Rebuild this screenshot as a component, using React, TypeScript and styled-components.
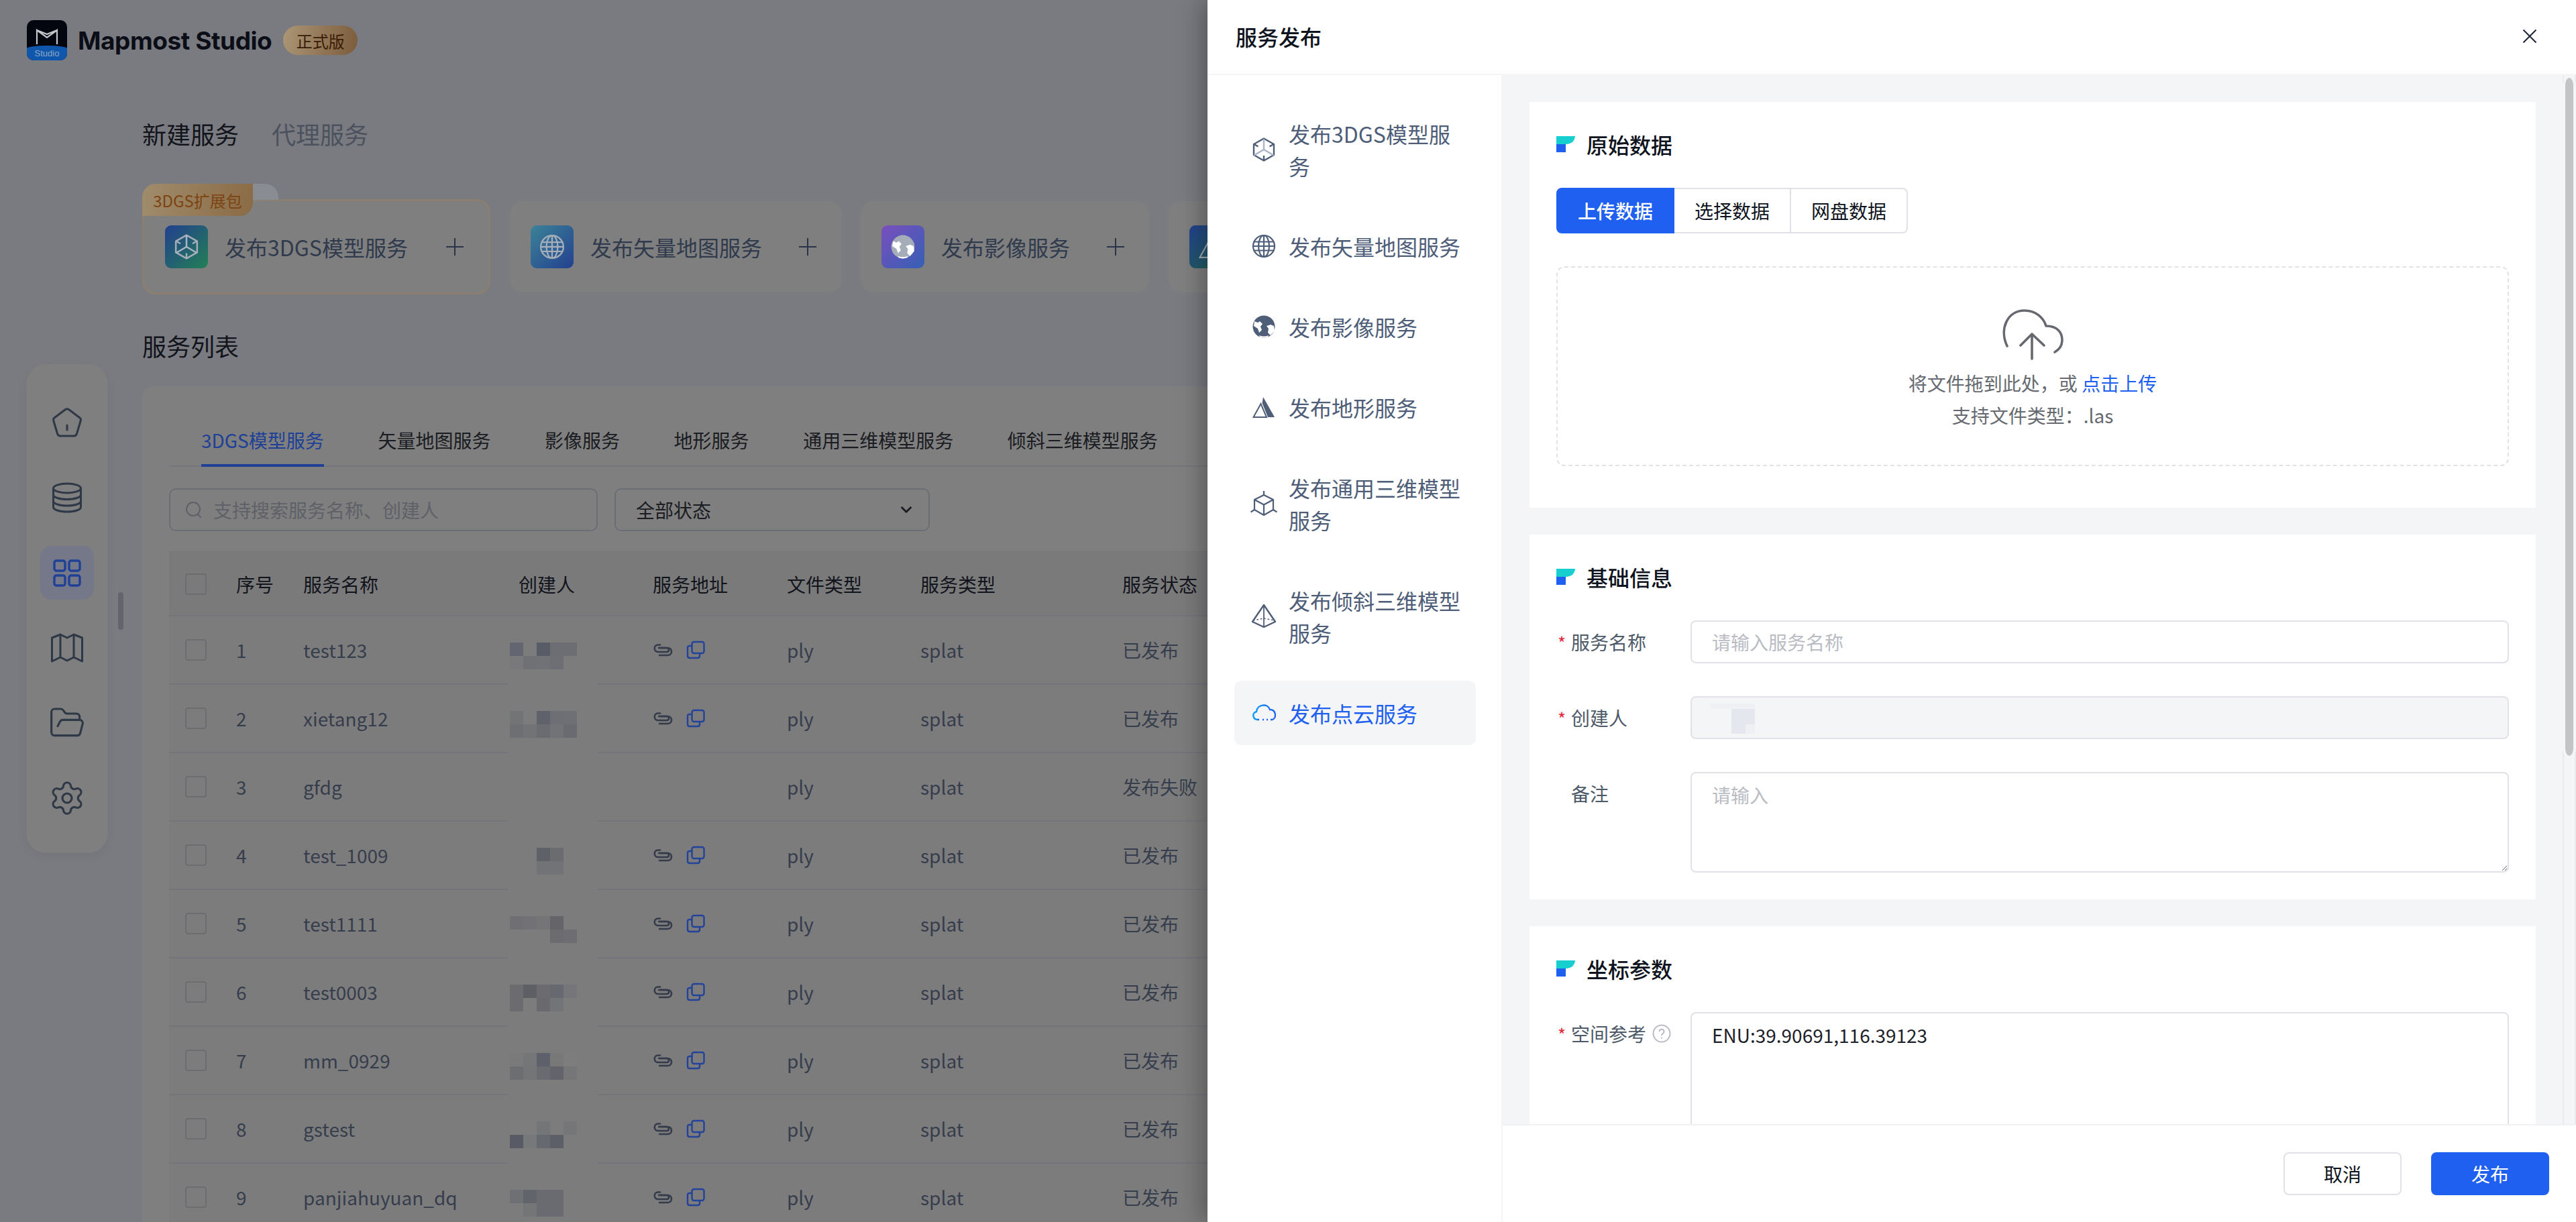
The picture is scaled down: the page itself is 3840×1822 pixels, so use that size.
import React from 'react';
import styled, { createGlobalStyle } from 'styled-components';
import { ChevronDown, FolderOpen, Settings } from 'lucide-react';

const GlobalStyle = createGlobalStyle`
  html, body { margin: 0; padding: 0; background: #7a7b80; }
  body {
    font-family: "Noto Sans CJK SC", "Noto Sans", sans-serif;
    font-size: 28px;
    overflow: hidden;
  }
  * { box-sizing: border-box; }
`;

const Screen = styled.div`
  display: flex;
  width: 3840px;
  height: 1822px;
  overflow: hidden;
`;

/* ---------- page under the mask ---------- */

const Page = styled.div`
  width: 1800px;
  flex: none;
  height: 100%;
  overflow: hidden;
  background: #7a7b80;
`;

const TopBar = styled.header`
  display: flex;
  align-items: center;
  height: 120px;
  padding: 0 0 0 40px;
`;

const BrandName = styled.span`
  margin-left: 16px;
  font-family: Inter, "Liberation Sans", sans-serif;
  font-weight: 700;
  font-size: 37px;
  letter-spacing: -0.45px;
  color: #0b0e16;
`;

const Edition = styled.span`
  margin-left: 17px;
  width: 111px;
  height: 44px;
  border-radius: 22px;
  display: flex;
  align-items: center;
  justify-content: center;
  font-size: 24px;
  color: #3a1c06;
  background: linear-gradient(100deg, #ab9676, #7b5c3c);
`;

const LogoBox = styled.div`
  position: relative;
  width: 60px;
  height: 60px;
  border-radius: 10px;
  overflow: hidden;
  background: #03060f;
`;

const LogoBand = styled.div`
  position: absolute;
  left: 0;
  right: 0;
  bottom: 0;
  height: 22px;
  background: #0f57ad;
  border-radius: 60% 60% 0 0 / 5px 5px 0 0;
  color: #8fa8c4;
  font-family: "Liberation Sans", sans-serif;
  font-size: 13px;
  line-height: 23px;
  text-align: center;
`;

const Body = styled.div`
  display: flex;
  align-items: flex-start;
`;

const Rail = styled.nav`
  position: relative;
  flex: none;
  margin: 423px 0 0 40px;
  width: 120px;
  height: 728px;
  padding: 47px 0 0;
  border-radius: 28px;
  background: #7f7f7f;
  box-shadow: 0 0 0 1px #7b7c80, 0 6px 16px rgba(40, 42, 50, 0.06);
  display: flex;
  flex-direction: column;
  align-items: center;
  gap: 32px;
`;

const RailItem = styled.div<{ $active?: boolean }>`
  width: 80px;
  height: 80px;
  border-radius: 16px;
  display: flex;
  align-items: center;
  justify-content: center;
  color: #2f3846;
  background: ${p => (p.$active ? '#757888' : 'transparent')};
`;

const RailHandle = styled.div`
  position: absolute;
  left: 136px;
  top: 340px;
  width: 8px;
  height: 56px;
  border-radius: 4px;
  background: #62656e;
`;

const Main = styled.main`
  flex: 1;
  min-width: 0;
  margin-left: 52px;
`;

const HeadTabs = styled.div`
  display: flex;
  gap: 49px;
  margin-top: 53px;
  font-size: 36px;
  line-height: 52px;
`;

const HeadTab = styled.span<{ $active?: boolean }>`
  color: ${p => (p.$active ? '#12141b' : '#4b525e')};
`;

const ServiceCards = styled.div`
  display: flex;
  align-items: center;
  gap: 29px;
  margin-top: 72px;
  width: 2200px;
`;

const ServiceCard = styled.div<{ $pack?: boolean }>`
  position: relative;
  flex: none;
  display: flex;
  align-items: center;
  height: ${p => (p.$pack ? '142px' : '136px')};
  padding: 0 ${p => (p.$pack ? '37px' : '37px')} 0 ${p => (p.$pack ? '31px' : '31px')};
  border-radius: 20px;
  background: #7f7f7f;
  border: ${p => (p.$pack ? '3px solid #8a7f70' : 'none')};
  box-shadow: ${p => (p.$pack ? 'none' : '0 0 0 4px #7b7c80')};
`;

const PackTag = styled.div`
  position: absolute;
  left: -3px;
  top: -26px;
  z-index: 1;
  width: 165px;
  height: 48px;
  border-radius: 20px 0 20px 0;
  display: flex;
  align-items: center;
  justify-content: center;
  font-size: 24px;
  color: #7c4412;
  background: linear-gradient(100deg, #a08c6c, #8a6b45);
`;

const PackTagEar = styled.div`
  position: absolute;
  left: 150px;
  top: -26px;
  width: 50px;
  height: 24px;
  border-radius: 0 20px 0 0;
  background: #8a8c94;
`;

const ServiceIcon = styled.div<{ $from: string; $to: string }>`
  width: 64px;
  height: 64px;
  border-radius: 9px;
  flex: none;
  display: flex;
  align-items: center;
  justify-content: center;
  color: #a4adb8;
  background: linear-gradient(135deg, ${p => p.$from}, ${p => p.$to});
`;

const ServiceLabel = styled.span`
  margin-left: 25px;
  font-size: 32px;
  white-space: nowrap;
  color: #303a4d;
`;

const Plus = styled.svg<{ $pack?: boolean }>`
  margin-left: ${p => (p.$pack ? '57px' : '55px')};
  width: 26px;
  height: 26px;
  flex: none;
  color: #2a3448;
`;

const SectionHead = styled.h2`
  margin: 50px 0 35px;
  font-size: 36px;
  line-height: 52px;
  font-weight: 400;
  color: #12141b;
`;

const Panel = styled.section`
  padding: 44px 0 0 40px;
  border-radius: 16px 0 0 0;
  background: #7f7f7f;
  height: 1300px;
`;

const SubTabs = styled.div`
  display: flex;
  gap: 80.6px;
  padding-left: 48px;
  border-bottom: 2px solid #75767d;
`;

const SubTab = styled.div<{ $active?: boolean }>`
  height: 76px;
  margin-bottom: -2px;
  line-height: 40px;
  padding-top: 16px;
  font-size: 28px;
  white-space: nowrap;
  color: ${p => (p.$active ? '#1e4096' : '#1a1c22')};
  border-bottom: 4px solid ${p => (p.$active ? '#1e4096' : 'transparent')};
`;

const Filters = styled.div`
  display: flex;
  gap: 25px;
  margin-top: 32px;
`;

const SearchBox = styled.div`
  width: 639px;
  height: 64px;
  border: 2px solid #6c6e75;
  border-radius: 10px;
  display: flex;
  align-items: center;
  padding-left: 22px;
  gap: 16px;
  font-size: 28px;
  color: #5e6168;
`;

const StatusSelect = styled.div`
  width: 470px;
  height: 64px;
  border: 2px solid #6c6e75;
  border-radius: 10px;
  display: flex;
  align-items: center;
  justify-content: space-between;
  padding: 0 20px 0 30px;
  font-size: 28px;
  color: #1a1c22;
`;

const Table = styled.div`
  margin-top: 29px;
  font-size: 28px;
`;

const Row = styled.div<{ $head?: boolean }>`
  display: grid;
  grid-template-columns: 100px 100px 306px 132px 83px 200px 199px 301px 200px;
  height: ${p => (p.$head ? '98px' : '102px')};
  background: ${p => (p.$head ? '#7a7a7b' : '#7c7c7c')};
  color: ${p => (p.$head ? '#12141b' : '#363d4c')};
`;

const Cell = styled.div<{ $plain?: boolean; $head?: boolean }>`
  display: flex;
  align-items: center;
  white-space: nowrap;
  padding-top: ${p => (p.$head ? '4px' : '0')};
  border-bottom: ${p => (p.$plain ? 'none' : '2px solid #74757b')};
`;

const CheckCell = styled(Cell)`
  padding-left: 24px;
`;

const CreatorHead = styled(Cell)`
  padding-left: 15px;
`;

const Check = styled.span`
  width: 32px;
  height: 32px;
  border: 2px solid #6c6d71;
  border-radius: 4px;
`;

const Mosaic = styled.div`
  display: grid;
  grid-template-columns: repeat(5, 20px);
  grid-auto-rows: 20px;
  margin: 16px 0 0 2px;
`;

const MosaicCell = styled.span<{ $c: string }>`
  background: ${p => p.$c};
`;

const UrlIcons = styled.div`
  display: flex;
  align-items: center;
  gap: 20px;
`;

/* ---------- drawer ---------- */

const Drawer = styled.aside`
  position: relative;
  z-index: 2;
  width: 2040px;
  flex: none;
  height: 100%;
  background: #fff;
  display: flex;
  flex-direction: column;
  box-shadow: -8px 0 32px rgba(20, 20, 24, 0.35);
`;

const DrawerHead = styled.div`
  flex: none;
  height: 112px;
  border-bottom: 2px solid #f4f5f7;
  display: flex;
  align-items: center;
  justify-content: space-between;
  padding: 0 58px 2px 42px;
  font-size: 32px;
  font-weight: 500;
  color: #0e1320;
`;

const DrawerBody = styled.div`
  flex: 1;
  min-height: 0;
  display: flex;
`;

const SideNav = styled.nav`
  flex: none;
  width: 438px;
  padding: 39px 38px 0 40px;
  display: flex;
  flex-direction: column;
  gap: 24px;
`;

const NavItem = styled.div<{ $active?: boolean }>`
  display: flex;
  align-items: center;
  gap: 19px;
  padding: 24px 20px 24px 26px;
  border-radius: 10px;
  font-size: 32px;
  line-height: 48px;
  color: ${p => (p.$active ? '#2060f0' : '#4e5d78')};
  background: ${p => (p.$active ? '#f4f5f7' : 'transparent')};
`;

const NavIcon = styled.span`
  flex: none;
  width: 36px;
  display: flex;
  justify-content: center;
`;

const RightCol = styled.div`
  flex: 1;
  min-width: 0;
  display: flex;
  flex-direction: column;
`;

const ScrollArea = styled.div`
  flex: 1;
  min-height: 0;
  display: flex;
  background: #f4f5f7;
  overflow: hidden;
`;

const Form = styled.div`
  flex: none;
  width: 1582px;
  padding: 40px 40px 0 42px;
  display: flex;
  flex-direction: column;
  gap: 40px;
`;

const Track = styled.div`
  flex: none;
  width: 20px;
  height: 100%;
  border: solid #e9eaed;
  border-width: 0 2px;
`;

const Thumb = styled.div`
  width: 20px;
  height: 1011px;
  margin: 4px 0 0 -2px;
  background: #c3c4c6;
  background-clip: padding-box;
  border: solid #f4f5f7;
  border-width: 0 4px;
  border-radius: 10px;
`;

const FormCard = styled.section<{ $bottom: number }>`
  flex: none;
  background: #fff;
  padding: 40px 40px ${p => p.$bottom}px;
`;

const CardTitle = styled.h3`
  margin: 0 0 42px;
  display: flex;
  align-items: center;
  gap: 17px;
  font-size: 32px;
  line-height: 46px;
  font-weight: 500;
  color: #0e1320;
`;

const Segments = styled.div`
  display: flex;
  width: 524px;
  height: 68px;
  margin-top: 1px;
`;

const Segment = styled.button<{ $active?: boolean }>`
  flex: 1;
  font: inherit;
  font-size: 28px;
  font-weight: ${p => (p.$active ? 500 : 400)};
  color: ${p => (p.$active ? '#fff' : '#0e1320')};
  background: ${p => (p.$active ? '#2060f0' : '#fff')};
  border: 2px solid ${p => (p.$active ? '#2060f0' : '#dfe1e6')};
  border-left-width: ${p => (p.$active ? '2px' : '0')};
  padding: 0;
  &:first-child { border-radius: 8px 0 0 8px; }
  &:last-child { border-radius: 0 8px 8px 0; }
`;

const DropZone = styled.div`
  margin-top: 49px;
  height: 298px;
  border: 2px dashed #e2e3e6;
  border-radius: 12px;
  display: flex;
  flex-direction: column;
  align-items: center;
  padding-top: 62px;
  font-size: 28px;
  line-height: 48px;
  color: #666a70;
`;

const DropText = styled.div`
  margin-top: 10px;
  text-align: center;
`;

const LinkText = styled.span`
  color: #2060f0;
`;

const FieldRow = styled.div`
  display: flex;
  margin-top: 49px;
  &:first-of-type { margin-top: 0; }
`;

const FieldLabel = styled.label`
  flex: none;
  width: 200px;
  height: 64px;
  display: flex;
  align-items: center;
  font-size: 28px;
  color: #4e5969;
`;

const Star = styled.span`
  width: 22px;
  padding-left: 2px;
  color: #e8263a;
  font-size: 26px;
`;

const HelpIcon = styled.svg`
  margin-left: 9px;
  width: 28px;
  height: 28px;
`;

const fieldBase = `
  flex: 1;
  min-width: 0;
  font: inherit;
  font-size: 28px;
  color: #1d2129;
  border: 2px solid #e1e2e7;
  border-radius: 8px;
  padding: 0 30px;
  outline: none;
  &::placeholder { color: #b9bcc3; }
`;

const TextInput = styled.input`
  ${fieldBase}
  height: 64px;
  background: #fff;
`;

const LockedField = styled.div`
  ${fieldBase}
  position: relative;
  height: 64px;
  background: #f4f5f7;
`;

const LockedMosaic = styled.svg`
  position: absolute;
  left: 28px;
  top: 9px;
`;

const TextArea = styled.textarea<{ $tall?: boolean }>`
  ${fieldBase}
  display: block;
  height: ${p => (p.$tall ? '320px' : '150px')};
  padding: 12px 30px;
  line-height: 40px;
  resize: vertical;
  background: #fff;
`;

const DrawerFoot = styled.footer`
  flex: none;
  height: 146px;
  border-top: 2px solid #f0f1f3;
  border-left: 2px solid #f4f5f7;
  display: flex;
  justify-content: flex-end;
  align-items: flex-start;
  gap: 44px;
  padding: 40px 40px 0 0;
`;

const FootButton = styled.button<{ $primary?: boolean }>`
  width: 176px;
  height: 64px;
  font: inherit;
  font-size: 28px;
  border-radius: 8px;
  color: ${p => (p.$primary ? '#fff' : '#0e1320')};
  background: ${p => (p.$primary ? '#2060f0' : '#fff')};
  border: 2px solid ${p => (p.$primary ? '#2060f0' : '#e1e2e7')};
`;

/* ---------- drawings ---------- */

const LogoMark = () => (
  <svg width="60" height="60" viewBox="0 0 60 60" style={{ position: 'absolute', left: 0, top: 0 }}>
    <path d="M15 36 V15 L30 26 L45 15 V36 M15 15 L30 21 L45 15" fill="none" stroke="#c4c6ca" strokeWidth="2.2" />
  </svg>
);

const HomeGlyph = () => (
  <svg width="48" height="48" viewBox="0 0 48 48" fill="none" stroke="currentColor" strokeWidth="3" strokeLinejoin="round" strokeLinecap="round">
    <path d="M21.5 4.5 Q24 3 26.5 4.5 L43 17 Q45 18.5 44.3 21 L38.5 40.5 Q37.5 44 34 44 H14 Q10.5 44 9.5 40.5 L3.7 21 Q3 18.5 5 17 Z" />
    <path d="M24 28 V35" />
  </svg>
);

const DatabaseGlyph = () => (
  <svg width="48" height="48" viewBox="0 0 48 48" fill="none" stroke="currentColor" strokeWidth="3">
    <ellipse cx="24" cy="10" rx="20.5" ry="7" />
    <path d="M3.5 10 V38 C3.5 42 12.5 45 24 45 C35.5 45 44.5 42 44.5 38 V10" />
    <path d="M3.5 19.5 C3.5 23.5 12.5 26.5 24 26.5 C35.5 26.5 44.5 23.5 44.5 19.5" />
    <path d="M3.5 29 C3.5 33 12.5 36 24 36 C35.5 36 44.5 33 44.5 29" />
  </svg>
);

const GridGlyph = () => (
  <svg width="48" height="48" viewBox="0 0 48 48" fill="none" stroke="#1e4096" strokeWidth="3.4">
    <rect x="5" y="6" width="16" height="15" rx="3" />
    <rect x="27" y="6" width="16" height="15" rx="3" />
    <rect x="5" y="28" width="16" height="15" rx="3" />
    <rect x="27" y="28" width="16" height="15" rx="3" />
  </svg>
);

const MapGlyph = () => (
  <svg width="48" height="44" viewBox="0 0 48 44" fill="none" stroke="currentColor" strokeWidth="3" strokeLinejoin="round">
    <path d="M1.5 7 L14 2 L24 7 L34 2 L46.5 7 V42 L34 36 L24 41 L14 36 L1.5 42 Z" />
    <path d="M14 2 V36 M34 2 V36" />
  </svg>
);

const SearchGlyph = () => (
  <svg width="26" height="26" viewBox="0 0 26 26" fill="none" stroke="#5e6168" strokeWidth="2">
    <circle cx="12" cy="12" r="10" />
    <path d="M19 20 L23 24" strokeLinecap="round" />
  </svg>
);

const LinkGlyph = () => (
  <svg width="30" height="28" viewBox="0 0 30 28" fill="none" stroke="#343b4b" strokeWidth="2.6" strokeLinecap="round">
    <path d="M11 6.5 H8 C1 6.5 1 17 8 17 H21 C25 17 25 11 21 11 H11" />
    <path d="M9 11 H22 C30 11 30 22 22 22 H10" />
  </svg>
);

const CopyGlyph = () => (
  <svg width="28" height="28" viewBox="0 0 28 28" fill="none" stroke="#23439b" strokeWidth="2.4" strokeLinejoin="round">
    <rect x="8.5" y="2" width="18" height="17" rx="3" />
    <path d="M8 8 H5 Q2 8 2 11 V23 Q2 26 5 26 H17 Q20 26 20 23 V19.5" />
  </svg>
);

const CubeGlyph = ({ size = 36 }: { size?: number }) => (
  <svg width={size} height={size} viewBox="0 0 36 36" fill="none" stroke="currentColor" strokeWidth="2.4" strokeLinejoin="round">
    <path d="M18 1.5 L33 10 V26 L18 34.5 L3 26 V10 Z" />
    <path d="M18 2 V18 M18 18 L3.5 26.5 M18 18 L32.5 26.5" stroke="#aab4c6" />
    <path d="M18 34 V27 M3.5 10 L9.5 13.5 M32.5 10 L26.5 13.5" />
  </svg>
);

const GlobeGlyph = ({ size = 36 }: { size?: number }) => (
  <svg width={size} height={size} viewBox="0 0 36 36" fill="none" stroke="currentColor" strokeWidth="2.2">
    <circle cx="18" cy="18" r="16" />
    <ellipse cx="18" cy="18" rx="8" ry="16" />
    <path d="M18 2 V34 M3.5 11.5 H32.5 M2 18 H34 M3.5 24.5 H32.5" />
  </svg>
);

const EarthGlyph = ({ size = 36 }: { size?: number }) => (
  <svg width={size} height={size} viewBox="0 0 36 36">
    <circle cx="18" cy="18" r="16.5" fill="currentColor" />
    <path d="M4 10 L9 12 L12 10 L16 14 L13 18 L15 23 L11 27 L9 21 L3 17 Z M22 17 L28 15 L33 17 L34 24 L28 31 L24 27 L25 21 Z M11 31 Q18 34 25 31 L24 33.5 Q18 35.5 12 33.5 Z" fill="#fff" />
  </svg>
);

const TerrainGlyph = ({ size = 36 }: { size?: number }) => (
  <svg width={size} height={size} viewBox="0 0 36 36">
    <path d="M2.5 33 L13.5 13 L22 33 Z" fill="none" stroke="currentColor" strokeWidth="2" />
    <path d="M17 3 L34 33 H24 L15.5 12 Z" fill="currentColor" />
  </svg>
);

const AxisCubeGlyph = () => (
  <svg width="40" height="40" viewBox="0 0 40 40" fill="none" stroke="currentColor" strokeWidth="2.2" strokeLinejoin="round" style={{ flex: 'none' }}>
    <path d="M20 7 L34 14 V29 L20 37 L6 29 V14 Z" />
    <path d="M6 14 L20 21.5 L34 14 M20 21.5 V37 M20 7 V1 M6 29 L0.5 32.5 M34 29 L39.5 32.5" />
  </svg>
);

const PyramidGlyph = () => (
  <svg width="38" height="38" viewBox="0 0 38 38" fill="none" stroke="currentColor" strokeWidth="2.4" strokeLinejoin="round" style={{ flex: 'none' }}>
    <path d="M19 2 L36 27 L19 35 L2 27 Z" />
    <path d="M19 2 V35" strokeWidth="1.8" />
    <path d="M3 25 L19 22 L35 25" strokeWidth="1.6" strokeDasharray="2.5 3" />
  </svg>
);

const CloudGlyph = () => (
  <svg width="36" height="36" viewBox="0 0 36 36" fill="none">
    <defs>
      <linearGradient id="cloudStroke" x1="0" y1="0" x2="1" y2="0">
        <stop offset="0" stopColor="#0a9cf6" />
        <stop offset="1" stopColor="#2060f0" />
      </linearGradient>
    </defs>
    <path d="M9 28 C1.5 28 -0.5 18 7 16 C8 5 24 3 27 13 C36 13 37.5 25 31 28" stroke="url(#cloudStroke)" strokeWidth="2.4" strokeLinecap="round" />
    <path d="M9 28 H11 M16 28 H18 M22 28 H24 M28 28 H30" stroke="#2060f0" strokeWidth="2.4" />
  </svg>
);

const SectionMark = () => (
  <svg width="28" height="24" viewBox="0 0 28 24">
    <path d="M0 0 H28 C27.5 7 23 12 14 12 V24 H0 Z" fill="#17cfcf" />
    <path d="M0 12 H14 V24 H0 Z" fill="#2060f0" />
  </svg>
);

const UploadCloud = () => (
  <svg width="92" height="76" viewBox="0 0 92 76" fill="none" stroke="#666a70" strokeWidth="3.6" strokeLinecap="round" strokeLinejoin="round">
    <path d="M8 55 C-4 30 8 2 34 2 C50 2 62 12 66 25 C82 25 90 34 90 46 C90 54 86 60 79 64" />
    <path d="M45 74 V37 M28 54 L45 37 L63 54" />
  </svg>
);

/* ---------- data ---------- */

// the fourth card runs under the drawer, only its icon shows
const services: { label?: string; from: string; to: string; icon: React.ReactNode; pack?: boolean }[] = [
  { label: '发布3DGS模型服务', from: '#22408f', to: '#238055', icon: <CubeGlyph size={38} />, pack: true },
  { label: '发布矢量地图服务', from: '#3c8398', to: '#22408f', icon: <GlobeGlyph size={38} /> },
  { label: '发布影像服务', from: '#7a4fbe', to: '#3560b4', icon: <EarthGlyph size={38} /> },
  { from: '#22408f', to: '#1f6a50', icon: <TerrainGlyph size={38} /> },
];

const navItems: { label: string; icon: React.ReactNode; active?: boolean }[] = [
  { label: '发布3DGS模型服务', icon: <CubeGlyph /> },
  { label: '发布矢量地图服务', icon: <GlobeGlyph /> },
  { label: '发布影像服务', icon: <EarthGlyph /> },
  { label: '发布地形服务', icon: <TerrainGlyph /> },
  { label: '发布通用三维模型服务', icon: <AxisCubeGlyph /> },
  { label: '发布倾斜三维模型服务', icon: <PyramidGlyph /> },
  { label: '发布点云服务', icon: <CloudGlyph />, active: true },
];

const subTabs = ['3DGS模型服务', '矢量地图服务', '影像服务', '地形服务', '通用三维模型服务', '倾斜三维模型服务'];

const columns = ['序号', '服务名称', '创建人', '服务地址', '文件类型', '服务类型', '服务状态'];

const T = 'transparent';

const rows: { no: number; name: string; status: string; mosaic: string[] }[] = [
  { no: 1, name: 'test123', status: '已发布', mosaic: ['#636670', T, '#585c66', '#6d6e73', '#6d6e73', '#79797b', '#6f7175', '#717275', '#6e6f74', T] },
  { no: 2, name: 'xietang12', status: '已发布', mosaic: ['#737476', T, '#5f626b', '#6e6f75', '#6f7075', '#6e6f73', '#727375', '#6b6c71', '#727376', '#6a6b71'] },
  { no: 3, name: 'gfdg', status: '发布失败', mosaic: [] },
  { no: 4, name: 'test_1009', status: '已发布', mosaic: [T, T, '#5f6168', '#6b6c70', T, T, T, '#727377', '#727377', T] },
  { no: 5, name: 'test1111', status: '已发布', mosaic: ['#707074', '#727276', '#757578', '#646469', T, T, T, T, '#6b6b70', '#6e6e72'] },
  { no: 6, name: 'test0003', status: '已发布', mosaic: ['#6c6c70', '#5d5f65', '#6b6b70', '#666970', '#76767a', '#6b6b70', T, '#6a6a6e', '#737478', '#7c7c7d'] },
  { no: 7, name: 'mm_0929', status: '已发布', mosaic: ['#7a7a7b', '#757677', '#5e616b', '#787879', '#7d7d7d', '#6d6e72', '#747577', '#6a6b70', '#62636b', '#757678'] },
  { no: 8, name: 'gstest', status: '已发布', mosaic: ['#7d7d7d', '#7d7d7d', '#747577', T, '#757678', '#585b65', '#777879', '#666970', '#5c5f68', '#7c7c7c'] },
  { no: 9, name: 'panjiahuyuan_dq', status: '已发布', mosaic: ['#6f7074', '#62646c', '#6a6b70', '#6a6b70', T, '#7c7c7c', '#747577', '#6a6b70', '#6a6b70', T] },
];

export default function App() {
  return (
    <Screen>
      <GlobalStyle />
      <Page>
        <TopBar>
          <LogoBox>
            <LogoMark />
            <LogoBand>Studio</LogoBand>
          </LogoBox>
          <BrandName>Mapmost Studio</BrandName>
          <Edition>正式版</Edition>
        </TopBar>
        <Body>
          <Rail>
            <RailItem><HomeGlyph /></RailItem>
            <RailItem><DatabaseGlyph /></RailItem>
            <RailItem $active><GridGlyph /></RailItem>
            <RailItem><MapGlyph /></RailItem>
            <RailItem><FolderOpen size={56} strokeWidth={1.35} /></RailItem>
            <RailItem><Settings size={56} strokeWidth={1.35} /></RailItem>
            <RailHandle />
          </Rail>
          <Main>
            <HeadTabs>
              <HeadTab $active>新建服务</HeadTab>
              <HeadTab>代理服务</HeadTab>
            </HeadTabs>
            <ServiceCards>
              {services.map((s, i) => (
                <ServiceCard key={i} $pack={s.pack}>
                  {s.pack && <PackTagEar />}
                  {s.pack && <PackTag>3DGS扩展包</PackTag>}
                  <ServiceIcon $from={s.from} $to={s.to}>{s.icon}</ServiceIcon>
                  {s.label && <ServiceLabel>{s.label}</ServiceLabel>}
                  <Plus $pack={s.pack} viewBox="0 0 26 26" fill="none" stroke="currentColor" strokeWidth="2">
                    <path d="M13 0 V26 M0 13 H26" />
                  </Plus>
                </ServiceCard>
              ))}
            </ServiceCards>
            <SectionHead>服务列表</SectionHead>
            <Panel>
              <SubTabs>
                {subTabs.map((t, i) => (
                  <SubTab key={t} $active={i === 0}>{t}</SubTab>
                ))}
              </SubTabs>
              <Filters>
                <SearchBox>
                  <SearchGlyph />
                  支持搜索服务名称、创建人
                </SearchBox>
                <StatusSelect>
                  全部状态
                  <ChevronDown size={26} strokeWidth={2.6} />
                </StatusSelect>
              </Filters>
              <Table>
                <Row $head>
                  <CheckCell $head><Check /></CheckCell>
                  <Cell $head>{columns[0]}</Cell>
                  <Cell $head>{columns[1]}</Cell>
                  <CreatorHead $head>{columns[2]}</CreatorHead>
                  <Cell $head />
                  <Cell $head>{columns[3]}</Cell>
                  <Cell $head>{columns[4]}</Cell>
                  <Cell $head>{columns[5]}</Cell>
                  <Cell $head>{columns[6]}</Cell>
                </Row>
                {rows.map(r => (
                  <Row key={r.no}>
                    <CheckCell><Check /></CheckCell>
                    <Cell>{r.no}</Cell>
                    <Cell>{r.name}</Cell>
                    <Cell $plain>
                      <Mosaic>
                        {r.mosaic.map((c, i) => <MosaicCell key={i} $c={c} />)}
                      </Mosaic>
                    </Cell>
                    <Cell />
                    <Cell>
                      {r.mosaic.length > 0 && (
                        <UrlIcons>
                          <LinkGlyph />
                          <CopyGlyph />
                        </UrlIcons>
                      )}
                    </Cell>
                    <Cell>ply</Cell>
                    <Cell>splat</Cell>
                    <Cell>{r.status}</Cell>
                  </Row>
                ))}
              </Table>
            </Panel>
          </Main>
        </Body>
      </Page>

      <Drawer>
        <DrawerHead>
          服务发布
          <svg width="22" height="22" viewBox="0 0 22 22" stroke="#1d2333" strokeWidth="2" fill="none">
            <path d="M1.5 1.5 L20.5 20.5 M20.5 1.5 L1.5 20.5" />
          </svg>
        </DrawerHead>
        <DrawerBody>
          <SideNav>
            {navItems.map(n => (
              <NavItem key={n.label} $active={n.active}>
                <NavIcon>{n.icon}</NavIcon>
                <span>{n.label}</span>
              </NavItem>
            ))}
          </SideNav>
          <RightCol>
            <ScrollArea>
              <Form>
                <FormCard $bottom={62}>
                  <CardTitle><SectionMark />原始数据</CardTitle>
                  <Segments>
                    <Segment $active>上传数据</Segment>
                    <Segment>选择数据</Segment>
                    <Segment>网盘数据</Segment>
                  </Segments>
                  <DropZone>
                    <UploadCloud />
                    <DropText>
                      将文件拖到此处，或 <LinkText>点击上传</LinkText>
                      <br />
                      支持文件类型：.las
                    </DropText>
                  </DropZone>
                </FormCard>
                <FormCard $bottom={40}>
                  <CardTitle><SectionMark />基础信息</CardTitle>
                  <FieldRow>
                    <FieldLabel><Star>*</Star>服务名称</FieldLabel>
                    <TextInput placeholder="请输入服务名称" readOnly />
                  </FieldRow>
                  <FieldRow>
                    <FieldLabel><Star>*</Star>创建人</FieldLabel>
                    <LockedField>
                      <LockedMosaic width="66" height="46" viewBox="0 0 66 46">
                        <path d="M0 0 H66 V8 H0 Z" fill="#eef0f4" />
                        <path d="M31 8 H66 V31 H52 V45 H31 Z" fill="#e4e7ed" />
                        <path d="M52 31 H66 V45 H52 Z" fill="#eef0f4" />
                      </LockedMosaic>
                    </LockedField>
                  </FieldRow>
                  <FieldRow>
                    <FieldLabel><Star />备注</FieldLabel>
                    <TextArea placeholder="请输入" readOnly />
                  </FieldRow>
                </FormCard>
                <FormCard $bottom={40}>
                  <CardTitle><SectionMark />坐标参数</CardTitle>
                  <FieldRow>
                    <FieldLabel>
                      <Star>*</Star>空间参考
                      <HelpIcon viewBox="0 0 28 28" fill="none" stroke="#b8bcc4" strokeWidth="2">
                        <circle cx="14" cy="14" r="12.5" />
                        <path d="M10.5 11 C10.5 6.5 17.5 6.5 17.5 11 C17.5 14 14 14 14 17 M14 19.5 V21.5" />
                      </HelpIcon>
                    </FieldLabel>
                    <TextArea $tall defaultValue="ENU:39.90691,116.39123" readOnly />
                  </FieldRow>
                </FormCard>
              </Form>
              <Track><Thumb /></Track>
            </ScrollArea>
            <DrawerFoot>
              <FootButton>取消</FootButton>
              <FootButton $primary>发布</FootButton>
            </DrawerFoot>
          </RightCol>
        </DrawerBody>
      </Drawer>
    </Screen>
  );
}
